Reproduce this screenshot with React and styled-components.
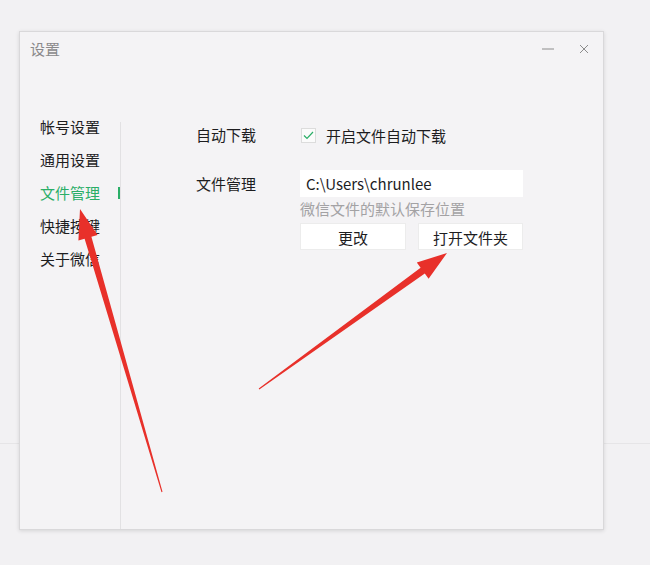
import React from 'react';
import styled, { createGlobalStyle } from 'styled-components';

const GlobalStyle = createGlobalStyle`
  html, body {
    margin: 0;
    padding: 0;
    background-color: #f2f1f3;
    background-image: linear-gradient(#e6e5e7, #e6e5e7);
    background-size: 100% 1px;
    background-position: 0 443px;
    background-repeat: no-repeat;
    font-family: 'Noto Sans CJK SC', 'Noto Sans', sans-serif;
  }
`;

const Page = styled.div`
  position: relative;
  width: 650px;
  height: 565px;
  padding: 31px 0 0 19px;
  box-sizing: border-box;
`;

const Window = styled.div`
  width: 585px;
  height: 499px;
  box-sizing: border-box;
  background: #f4f3f5;
  border: 1px solid #d9d8da;
  box-shadow: 0 1px 4px rgba(0, 0, 0, 0.12);
  display: flex;
  flex-direction: column;
`;

const TitleBar = styled.div`
  height: 78px;
  flex-shrink: 0;
  display: flex;
  align-items: flex-start;
  justify-content: space-between;
  padding: 7px 12px 0 10px;
  box-sizing: border-box;
`;

const Title = styled.div`
  font-size: 15px;
  line-height: 20px;
  color: #8a898b;
`;

const Controls = styled.div`
  display: flex;
  gap: 22px;
  padding-top: 3px;
`;

const CtrlButton = styled.span`
  width: 14px;
  height: 14px;
  display: flex;
  align-items: center;
  justify-content: center;
`;

const Body = styled.div`
  flex: 1;
  display: flex;
`;

const Nav = styled.div`
  width: 100px;
  display: flex;
  flex-direction: column;
`;

const NavItem = styled.div`
  position: relative;
  height: 33px;
  line-height: 33px;
  padding-left: 20px;
  font-size: 15px;
  color: ${p => (p.$active ? '#2aae67' : '#1d1d1f')};

  &::after {
    content: '';
    display: ${p => (p.$active ? 'block' : 'none')};
    position: absolute;
    right: 0;
    top: 11px;
    width: 2px;
    height: 12px;
    background: #2aae67;
  }
`;

const Divider = styled.div`
  width: 1px;
  margin-top: 12px;
  background: #e2e1e3;
`;

const Content = styled.div`
  flex: 1;
  padding: 15px 0 0 75px;
  display: grid;
  grid-template-columns: 104px 223px;
  grid-auto-rows: min-content;
  row-gap: 25px;
  align-content: start;
`;

const Label = styled.div`
  font-size: 15px;
  line-height: ${p => p.$lh || 20}px;
  color: #1d1d1f;
`;

const CheckRow = styled.label`
  display: flex;
  align-items: center;
  gap: 10px;
  height: 20px;
  font-size: 15px;
  color: #1d1d1f;
`;

const CheckBox = styled.span`
  width: 15px;
  height: 15px;
  margin-left: 1px;
  box-sizing: border-box;
  border: 1px solid #dcdcdc;
  background: #fbfbfb;
  display: flex;
  align-items: center;
  justify-content: center;
`;

const FieldCol = styled.div`
  display: flex;
  flex-direction: column;
`;

const PathInput = styled.div`
  height: 27px;
  line-height: 27px;
  padding-left: 6px;
  background: #ffffff;
  font-size: 15px;
  color: #1d1d1f;
`;

const Hint = styled.div`
  font-size: 15px;
  line-height: 20px;
  margin-top: 2px;
  color: #a3a2a4;
`;

const Buttons = styled.div`
  display: flex;
  gap: 12px;
  margin-top: 4px;
`;

const Button = styled.div`
  width: ${p => p.$w}px;
  height: 27px;
  line-height: 27px;
  text-align: center;
  background: #ffffff;
  border: 1px solid #ececec;
  box-sizing: border-box;
  font-size: 15px;
  color: #1d1d1f;
`;

const Overlay = styled.svg`
  position: absolute;
  left: 0;
  top: 0;
  pointer-events: none;
`;

export default function App() {
  const navs = ['帐号设置', '通用设置', '文件管理', '快捷按键', '关于微信'];
  return (
    <Page>
      <GlobalStyle />
      <Window>
        <TitleBar>
          <Title>设置</Title>
          <Controls>
            <CtrlButton>
              <svg width="14" height="14" viewBox="0 0 14 14">
                <path d="M1 7h12" stroke="#8c8c8c" strokeWidth="1" />
              </svg>
            </CtrlButton>
            <CtrlButton>
              <svg width="14" height="14" viewBox="0 0 14 14">
                <path d="M3 3l8 8M11 3l-8 8" stroke="#8c8c8c" strokeWidth="1" />
              </svg>
            </CtrlButton>
          </Controls>
        </TitleBar>
        <Body>
          <Nav>
            {navs.map(n => (
              <NavItem key={n} $active={n === '文件管理'}>{n}</NavItem>
            ))}
          </Nav>
          <Divider />
          <Content>
            <Label>自动下载</Label>
            <CheckRow>
              <CheckBox>
                <svg width="11" height="9" viewBox="0 0 11 9">
                  <path d="M1 4.5l3 3L10 1" fill="none" stroke="#2aae67" strokeWidth="1.2" />
                </svg>
              </CheckBox>
              开启文件自动下载
            </CheckRow>
            <Label $lh={27}>文件管理</Label>
            <FieldCol>
              <PathInput>C:\Users\chrunlee</PathInput>
              <Hint>微信文件的默认保存位置</Hint>
              <Buttons>
                <Button $w={106}>更改</Button>
                <Button $w={105}>打开文件夹</Button>
              </Buttons>
            </FieldCol>
          </Content>
        </Body>
      </Window>
      <Overlay width="650" height="565" viewBox="0 0 650 565">
        <polygon
          fill="#e8302a"
          points="162.5,491.8 91.4,236.7 97.6,234.9 80,209 78.4,240.5 84.6,238.7 161.5,492.2"
        />
        <polygon
          fill="#e8302a"
          points="259.3,389.4 424.8,273.4 428.6,278.7 447,253 416.8,262.5 420.6,267.8 258.7,388.6"
        />
      </Overlay>
    </Page>
  );
}
